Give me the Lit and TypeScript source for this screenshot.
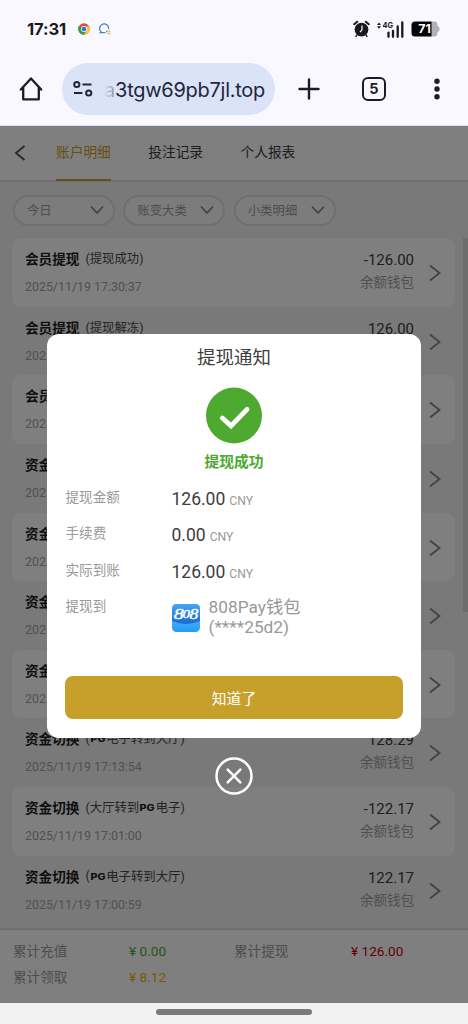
import { LitElement, html, css, svg } from "lit";
import { customElement, property } from "lit/decorators.js";

interface Entry { title: string; note?: string; time?: string; amount?: string; }

const PG = "PG";
const ENTRIES: Entry[] = [
  { title: "会员提现", note: "提现成功", time: "17:30:37", amount: "-126.00" },
  { title: "会员提现", note: "提现解冻", amount: "126.00" },
  { title: "会员" },
  { title: "资金" },
  { title: "资金" },
  { title: "资金" },
  { title: "资金" },
  { title: "资金切换", note: "PG电子转到大厅", time: "17:13:54", amount: "128.29" },
  { title: "资金切换", note: "大厅转到PG电子", time: "17:01:00", amount: "-122.17" },
  { title: "资金切换", note: "PG电子转到大厅", time: "17:00:59", amount: "122.17" },
];

const fonts = css`
  :host { font-family: Roboto, "Noto Sans CJK SC", sans-serif; }
  * { box-sizing: border-box; }
  svg { display: block; flex: none; }
`;

@customElement("status-bar")
class StatusBar extends LitElement {
  static styles = [fonts, css`
    :host { display: block; height: 56px; }
    .bar { display: flex; align-items: center; height: 56px; padding: 2px 28px 0 27px; color: #19191c; }
    .time { width: 51px; font: 700 16.6px/20px Inter, sans-serif; letter-spacing: -0.1px; white-space: nowrap; }
    .spacer { flex: 1; }
    .bubble { margin-left: 8px; }
    .alarm { margin-right: 7px; }
    .signal { margin-right: 7px; }
    text { font-family: Inter, sans-serif; font-weight: 700; }
  `];
  render() {
    return html`<div class="bar">
      <span class="time">17:31</span>
      <svg width="12" height="12" viewBox="0 0 24 24">
        <circle cx="12" cy="12" r="11.5" fill="#dd4b39"/>
        <path d="M2 6.2A11.5 11.5 0 0 0 11.5 23.5L17 15 12 12Z" fill="#2d9f57"/>
        <path d="M11.5 23.5A11.5 11.5 0 0 0 22.2 6.8H12L17 15Z" fill="#f8c62f"/>
        <circle cx="12" cy="12" r="6" fill="#fff"/><circle cx="12" cy="12" r="4.7" fill="#3271d8"/>
      </svg>
      <svg class="bubble" width="14" height="12" viewBox="0 0 14 12" fill="none" stroke-width="1.3">
        <path d="M7.4 9.7H2.2L3 8.600A4.500 4.500 0 1 1 10.600 6" stroke="#3f88cf"/>
        <path d="M9.200 7.600 8.600 9.400" stroke="#42a56b"/><path d="M11 7.200 11.600 9" stroke="#e9a540"/><path d="M9.400 10.500H12.600" stroke="#e9b957"/>
      </svg>
      <span class="spacer"></span>
      <svg class="alarm" width="17" height="18" viewBox="0 0 17 18">
        <circle cx="8.5" cy="9.600" r="6.900" fill="#19191c"/>
        <path d="M1.200 4.200 4.200 1.700M15.800 4.200 12.800 1.700" stroke="#19191c" stroke-width="2" stroke-linecap="round"/>
        <path d="M4 15 2.800 16.800M13 15l1.200 1.800" stroke="#19191c" stroke-width="1.500"/>
        <path d="M9 5.500V9.800L7 12.200" stroke="#fff" stroke-width="1.200" fill="none"/>
      </svg>
      <svg class="signal" width="27" height="17" viewBox="0 0 27 17">
        <path d="M0 4 2 1.500 4 4ZM0 5.200 2 7.700 4 5.200Z" fill="#19191c"/>
        <text x="5.400" y="7.400" font-size="8.200" textLength="10.600" lengthAdjust="spacingAndGlyphs" fill="#19191c">4G</text>
        <path d="M11.500 11.600v4.200M16 10v5.800M20.700 5.400v10.400M25.300 1.400V15.800" stroke="#19191c" stroke-width="2.300" stroke-linecap="round"/>
      </svg>
      <svg width="29" height="16" viewBox="0 0 29 16">
        <path d="M20 .5h3.200a3.300 3.300 0 0 1 3.300 3.300V5c1.700.4 2 1.500 2 3s-.3 2.600-2 3v1.200a3.300 3.300 0 0 1-3.300 3.300H20Z" fill="#b1b1b5"/>
        <path d="M4 .5H20.500v15H4A3.500 3.500 0 0 1 .5 12V4A3.500 3.500 0 0 1 4 .5Z" fill="#050505"/>
        <text x="7.300" y="12.400" font-size="12.400" textLength="12.600" lengthAdjust="spacingAndGlyphs" fill="#fff">71</text>
      </svg>
    </div>`;
  }
}

@customElement("browser-bar")
class BrowserBar extends LitElement {
  static styles = [fonts, css`
    :host { display: block; height: 70px; border-bottom: 1px solid #e1e4ef; }
    .bar { display: flex; align-items: center; padding: 6.500px 0 0 19px; color: #1b1c2b; }
    .url { display: flex; align-items: center; width: 213px; height: 52px; margin-left: 19px; padding-left: 11px; border-radius: 26px; background: #dbe3f8; overflow: hidden; }
    .host { display: flex; justify-content: flex-end; width: 161px; margin-left: 11px; padding-top: 2px; font: 400 20px/26px Inter, sans-serif; letter-spacing: -0.270px; white-space: nowrap; color: #22263a; overflow: hidden; }
    .fade { color: transparent; background: linear-gradient(90deg, #dbe3f8, #8c92a8); -webkit-background-clip: text; background-clip: text; }
    .plus { margin-left: 23px; }
    .tabs { display: flex; align-items: center; justify-content: center; width: 24px; height: 24px; margin-left: 42px; border: 2px solid #1b1c2b; border-radius: 6px; font: 700 14.500px/20px Inter, sans-serif; }
    .more { margin-left: 48px; }
  `];
  render() {
    return html`<div class="bar">
      <svg width="24" height="26" viewBox="0 0 24 26" fill="none" stroke="#1b1c2b" stroke-width="2.300" stroke-linejoin="round" stroke-linecap="round">
        <path d="M1.800 13.600 12 2.400 22.200 13.600M4.200 11.500V23.300H19.800V11.500"/>
      </svg>
      <div class="url">
        <svg width="20" height="18" viewBox="0 0 20 18" fill="none" stroke="#22263a" stroke-width="2">
          <circle cx="3.800" cy="4.500" r="2.600"/><path d="M9.500 4.500H18.500M1 13H9.500"/><circle cx="15.700" cy="13" r="2.600"/>
        </svg>
        <span class="host"><span class="fade">a</span>3tgw69pb7jl.top</span>
      </div>
      <svg class="plus" width="22" height="22" viewBox="0 0 22 22" stroke="#1b1c2b" stroke-width="2.400" stroke-linecap="round"><path d="M11 1.500v19M1.500 11h19"/></svg>
      <div class="tabs">5</div>
      <svg class="more" width="6" height="22" viewBox="0 0 6 22" fill="#1b1c2b"><circle cx="3" cy="3.200" r="2.700"/><circle cx="3" cy="11" r="2.700"/><circle cx="3" cy="18.800" r="2.700"/></svg>
    </div>`;
  }
}

@customElement("record-row")
class RecordRow extends LitElement {
  static styles = [fonts, css`
    :host { display: block; height: 68.650px; }
    .row { display: flex; height: 100%; padding: 0 14px 0 13px; border-radius: 9px; }
    .filled { background: #fff; }
    .left { flex: 1; padding-top: 10px; white-space: nowrap; }
    .head { display: flex; align-items: center; height: 20px; }
    .title { font-size: 13.600px; font-weight: 700; color: #1c1c1c; }
    .note { display: flex; align-items: center; margin-left: 6px; font-size: 12.400px; color: #484848; }
    .brand { margin: 1px 0.500px 0 0; }
    .brand text { font-family: Inter, sans-serif; font-weight: 800; }
    .time { margin-top: 11px; font-size: 12.400px; line-height: 16px; color: #a2a2a2; }
    .right { padding-top: 11px; text-align: right; margin-right: 15px; }
    .amount { font-size: 15px; line-height: 22px; color: #3d3d3d; }
    .wallet { margin-top: 2px; font-size: 13.500px; line-height: 19px; color: #a0a0a0; }
    .chev { margin-top: 26px; }
  `];
  @property({ attribute: false }) entry!: Entry;
  @property({ type: Boolean }) filled = false;
  note(text: string) {
    const [a, b] = text.split(PG);
    if (b === undefined) return html`<span class="note">(${a})</span>`;
    return html`<span class="note">(${a}<svg class="brand" width="16" height="9" viewBox="0 0 16 9"><text x="0.500" y="7.800" font-size="8.400" textLength="15" lengthAdjust="spacingAndGlyphs" fill="#1c1c1c">PG</text></svg>${b})</span>`;
  }
  render() {
    const { title, note, time, amount } = this.entry;
    return html`<div class="row ${this.filled ? "filled" : ""}">
      <div class="left">
        <div class="head"><span class="title">${title}</span>${note ? this.note(note) : ""}</div>
        <div class="time">${time ? `2025/11/19 ${time}` : "2025"}</div>
      </div>
      ${amount ? html`<div class="right"><div class="amount">${amount}</div>${time ? html`<div class="wallet">余额钱包</div>` : ""}</div>` : html`<div class="right"></div>`}
      <svg class="chev" width="12" height="18" viewBox="0 0 12 18" fill="none" stroke="#858585" stroke-width="1.800"><path d="M1 1.500 10.500 9 1 16.500"/></svg>
    </div>`;
  }
}

@customElement("notice-dialog")
class NoticeDialog extends LitElement {
  static styles = [fonts, css`
    :host { display: flex; flex-direction: column; align-items: center; }
    .box { display: flex; flex-direction: column; align-items: center; width: 374px; height: 404px; padding: 11px 18px 0; border-radius: 12px; background: #fff; }
    .title { font-size: 18.500px; line-height: 27px; color: #404040; }
    .tick { margin-top: 15px; }
    .state { margin-top: 7px; font-size: 14.800px; line-height: 22px; font-weight: 700; color: #4da92f; }
    .list { display: grid; grid-template-columns: 106px 1fr; width: 100%; margin-top: 12px; padding-left: 0.500px; grid-template-rows: 36.400px 36.200px 36px 80px; }
    .label { font-size: 13.600px; line-height: 24px; color: #999; }
    .value { font-size: 17.500px; line-height: 28px; color: #3d3d3d; white-space: nowrap; }
    .unit { margin-left: 4px; font-size: 12.200px; color: #999; }
    .account { display: flex; align-items: flex-start; }
    .logo { margin-top: 10px; }
    .name { margin: 3px 0 0 9px; font-size: 17.300px; line-height: 20.500px; color: #999; }
    .logo text { font-family: "Liberation Serif", serif; font-style: italic; stroke: #fff; stroke-width: 0.400px; }
    .ok { width: 338px; height: 43.500px; margin-top: 2.200px; padding-bottom: 1px; border-radius: 8px; background: #c6a02b; color: #fff; display: flex; align-items: center; justify-content: center; font-size: 14.800px; flex: none; }
    .close { margin-top: 18.500px; }
  `];
  money(label: string, value: string) {
    return html`<span class="label">${label}</span><span class="value">${value}<span class="unit">CNY</span></span>`;
  }
  render() {
    return html`<div class="box">
      <div class="title">提现通知</div>
      <svg class="tick" width="56" height="57" viewBox="0 0 56 57"><circle cx="28" cy="28.500" r="28" fill="#4da92f"/><path d="M16.300 31 25 38.800 41 22.300" fill="none" stroke="#fff" stroke-width="4.800" stroke-linecap="round"/></svg>
      <div class="state">提现成功</div>
      <div class="list">
        ${this.money("提现金额", "126.00")}${this.money("手续费", "0.00")}${this.money("实际到账", "126.00")}
        <span class="label">提现到</span>
        <div class="account">
          <svg class="logo" width="28" height="28" viewBox="0 0 28 28">
            <defs>
              <linearGradient id="top" x2="0" y2="1"><stop stop-color="#46a7f2"/><stop offset="1" stop-color="#1b67ce"/></linearGradient>
              <linearGradient id="low" x2="0" y2="1"><stop stop-color="#67c8ff"/><stop offset="1" stop-color="#239df2"/></linearGradient>
            </defs>
            <rect width="28" height="28" rx="4.500" fill="url(#low)"/>
            <path d="M0 17V4.500A4.500 4.500 0 0 1 4.500 0h19A4.500 4.500 0 0 1 28 4.500V17Q14 23 0 17Z" fill="url(#top)"/>
            <text x="1.800" y="15" font-size="15.500" textLength="10" lengthAdjust="spacingAndGlyphs" fill="#fff">8</text>
            <text x="10.600" y="14" font-size="11.500" textLength="7.500" lengthAdjust="spacingAndGlyphs" fill="#fff">0</text>
            <text x="17.400" y="14.600" font-size="14.500" textLength="8.800" lengthAdjust="spacingAndGlyphs" fill="#fff">8</text>
          </svg>
          <div class="name">808Pay钱包<br>(****25d2)</div>
        </div>
      </div>
      <div class="ok">知道了</div>
    </div>
    <svg class="close" width="38" height="38" viewBox="0 0 38 38" fill="none" stroke="#fff" stroke-linecap="round"><circle cx="19" cy="19" r="17.500" stroke-width="2.500"/><path d="M12.700 12.700l12.600 12.600M25.300 12.700 12.700 25.300" stroke-width="2.600"/></svg>`;
  }
}

@customElement("app-root")
class AppRoot extends LitElement {
  static styles = [fonts, css`
    :host { display: flex; flex-direction: column; width: 468px; height: 1024px; overflow: hidden; background: #f9f8ff; }
    .page { position: relative; display: flex; flex-direction: column; height: 877px; background: #f2f2f2; overflow: hidden; }
    .tabs { display: flex; height: 56px; padding-left: 14px; background: #fff; border-bottom: 2px solid #dedede; flex: none; }
    .back { margin: 18px 30px 0 0; }
    .tab { height: 55px; margin-right: 37.500px; padding-top: 14px; font-size: 13.700px; line-height: 24px; color: #3a3a3a; white-space: nowrap; }
    .active { color: #c6a02b; border-bottom: 2.500px solid #c6a02b; }
    .filters { display: flex; gap: 8.500px; padding: 13px 0 0 12.500px; height: 56px; flex: none; }
    .pill { display: flex; align-items: center; justify-content: space-between; width: 102px; height: 31px; padding: 0 9px 1px 12.500px; border: 2px solid #dedede; border-radius: 16px; background: #f8f8f8; font-size: 12.300px; color: #9a9a9a; }
    .body { display: flex; height: 690px; overflow: hidden; flex: none; }
    .rows { width: 443px; margin-left: 12px; }
    .thumb { width: 5px; height: 374px; margin-left: 8px; background: #dadada; }
    .totals { display: grid; grid-template-columns: 116px 105px 117px 1fr; grid-auto-rows: 26.800px; align-content: start; height: 76px; padding: 7.500px 0 0 13px; border-top: 2px solid #dedede; background: #fff; font-size: 13.600px; line-height: 27px; color: #9a9a9a; flex: none; }
    .green { color: #4da92f; } .gold { color: #e8b50b; } .red { color: #d00000; }
    .mask { position: absolute; inset: 0; padding-top: 208px; background: rgba(0, 0, 0, .5); }
    .nav { flex: 1; display: flex; justify-content: center; padding-top: 6px; background: #f2f2f2; }
    .handle { width: 156px; height: 6px; border-radius: 3px; background: #7b7b7b; }
  `];
  render() {
    const down = svg`<path d="M1 1.500 7 8 13 1.500"/>`;
    return html`
      <status-bar></status-bar>
      <browser-bar></browser-bar>
      <div class="page">
        <div class="tabs">
          <svg class="back" width="12" height="18" viewBox="0 0 12 18" fill="none" stroke="#555" stroke-width="1.900"><path d="M10.500 2 2 9l8.500 7"/></svg>
          <span class="tab active">账户明细</span><span class="tab">投注记录</span><span class="tab">个人报表</span>
        </div>
        <div class="filters">
          ${["今日", "账变大类", "小类明细"].map((f) => html`<div class="pill">${f}<svg width="14" height="10" viewBox="0 0 14 10" fill="none" stroke="#858585" stroke-width="1.700">${down}</svg></div>`)}
        </div>
        <div class="body">
          <div class="rows">${ENTRIES.map((e, i) => html`<record-row .entry=${e} ?filled=${i % 2 === 0}></record-row>`)}</div>
          <div class="thumb"></div>
        </div>
        <div class="totals">
          <span>累计充值</span><span class="green">¥ 0.00</span><span>累计提现</span><span class="red">¥ 126.00</span>
          <span>累计领取</span><span class="gold">¥ 8.12</span>
        </div>
        <div class="mask"><notice-dialog></notice-dialog></div>
      </div>
      <div class="nav"><div class="handle"></div></div>`;
  }
}
